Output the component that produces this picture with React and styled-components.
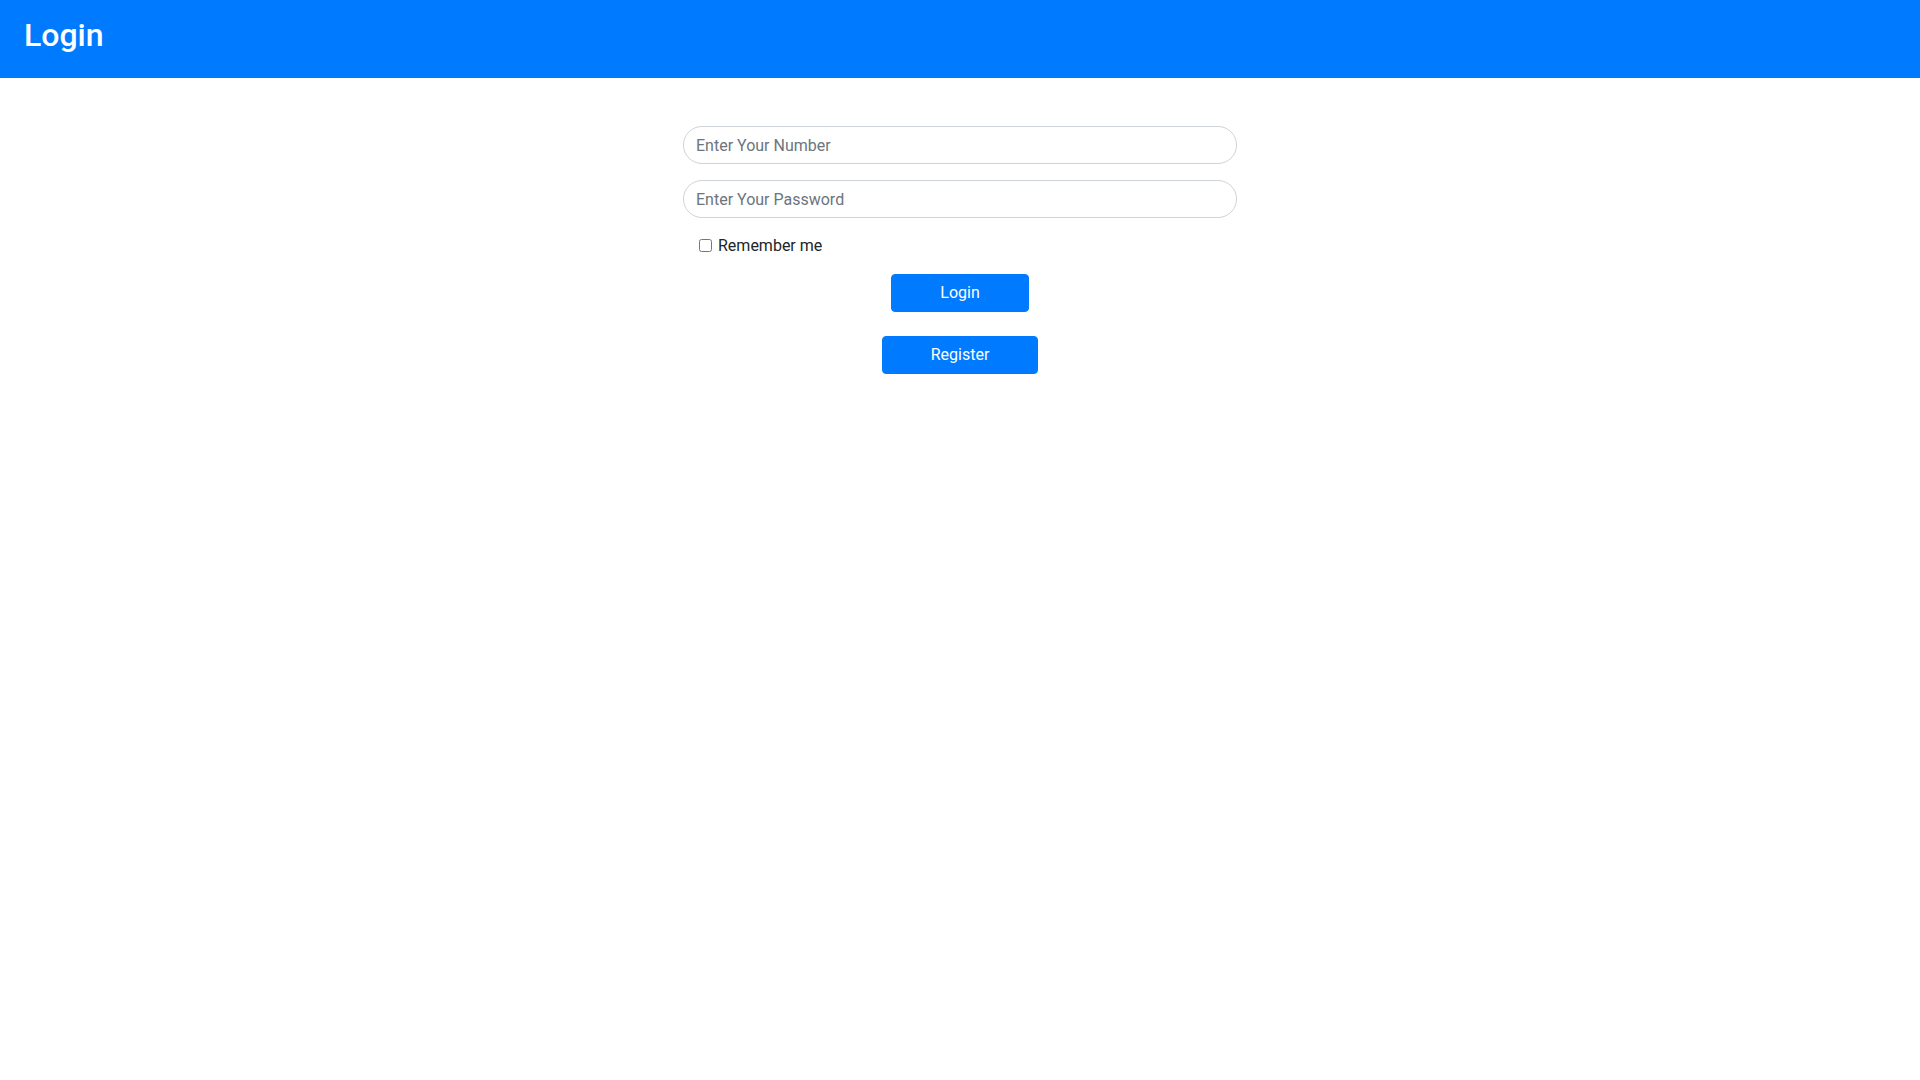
import React from "react";
import styled, { createGlobalStyle } from "styled-components";

/* ---------------- Global ---------------- */

const GlobalStyle = createGlobalStyle`
  html, body {
    margin: 0;
    padding: 0;
    background: #fff;
    font-family: Roboto, "Liberation Sans", Arial, sans-serif;
    color: #212529;
    font-size: 16px;
    line-height: 1.5;
  }
  * { box-sizing: border-box; }
`;

/* ---------------- Header ---------------- */

const TopBar = styled.header`
  background: #007bff;
  padding: 16px 24px;
`;

const Title = styled.h2`
  margin: 0 0 8px 0;
  color: #fff;
  font-size: 32px;
  font-weight: 500;
  line-height: 1.2;
`;

/* ---------------- Form ---------------- */

const Form = styled.form`
  width: 554px;
  margin: 48px auto 0;
  display: flex;
  flex-direction: column;
`;

const Field = styled.input`
  display: block;
  width: 100%;
  height: 38px;
  margin-bottom: 16px;
  padding: 6px 12px;
  font: inherit;
  font-size: 16px;
  color: #495057;
  background: #fff;
  border: 1px solid #ced4da;
  border-radius: 50rem;
  outline: none;

  &::placeholder {
    color: #6c757d;
  }
`;

const CheckRow = styled.label`
  display: flex;
  align-items: center;
  gap: 6px;
  height: 24px;
  margin-bottom: 16px;
  padding-left: 16px;
  font-size: 16px;
  color: #212529;

  input {
    margin: -1px 0 0 0;
    width: 13px;
    height: 13px;
  }
`;

const Actions = styled.div`
  display: flex;
  flex-direction: column;
  align-items: center;
  gap: 24px;
`;

const Button = styled.button`
  height: 38px;
  padding: 6px 48px;
  font: inherit;
  font-size: 16px;
  line-height: 1.5;
  color: #fff;
  background: #007bff;
  border: 1px solid #007bff;
  border-radius: 4px;
  cursor: pointer;
`;

/* ---------------- Component ---------------- */

export default function App() {
  return (
    <>
      <GlobalStyle />
      <TopBar>
        <Title>Login</Title>
      </TopBar>

      <Form onSubmit={(e) => e.preventDefault()}>
        <Field type="text" placeholder="Enter Your Number" />
        <Field type="password" placeholder="Enter Your Password" />

        <CheckRow>
          <input type="checkbox" />
          Remember me
        </CheckRow>

        <Actions>
          <Button type="submit">Login</Button>
          <Button type="button">Register</Button>
        </Actions>
      </Form>
    </>
  );
}
